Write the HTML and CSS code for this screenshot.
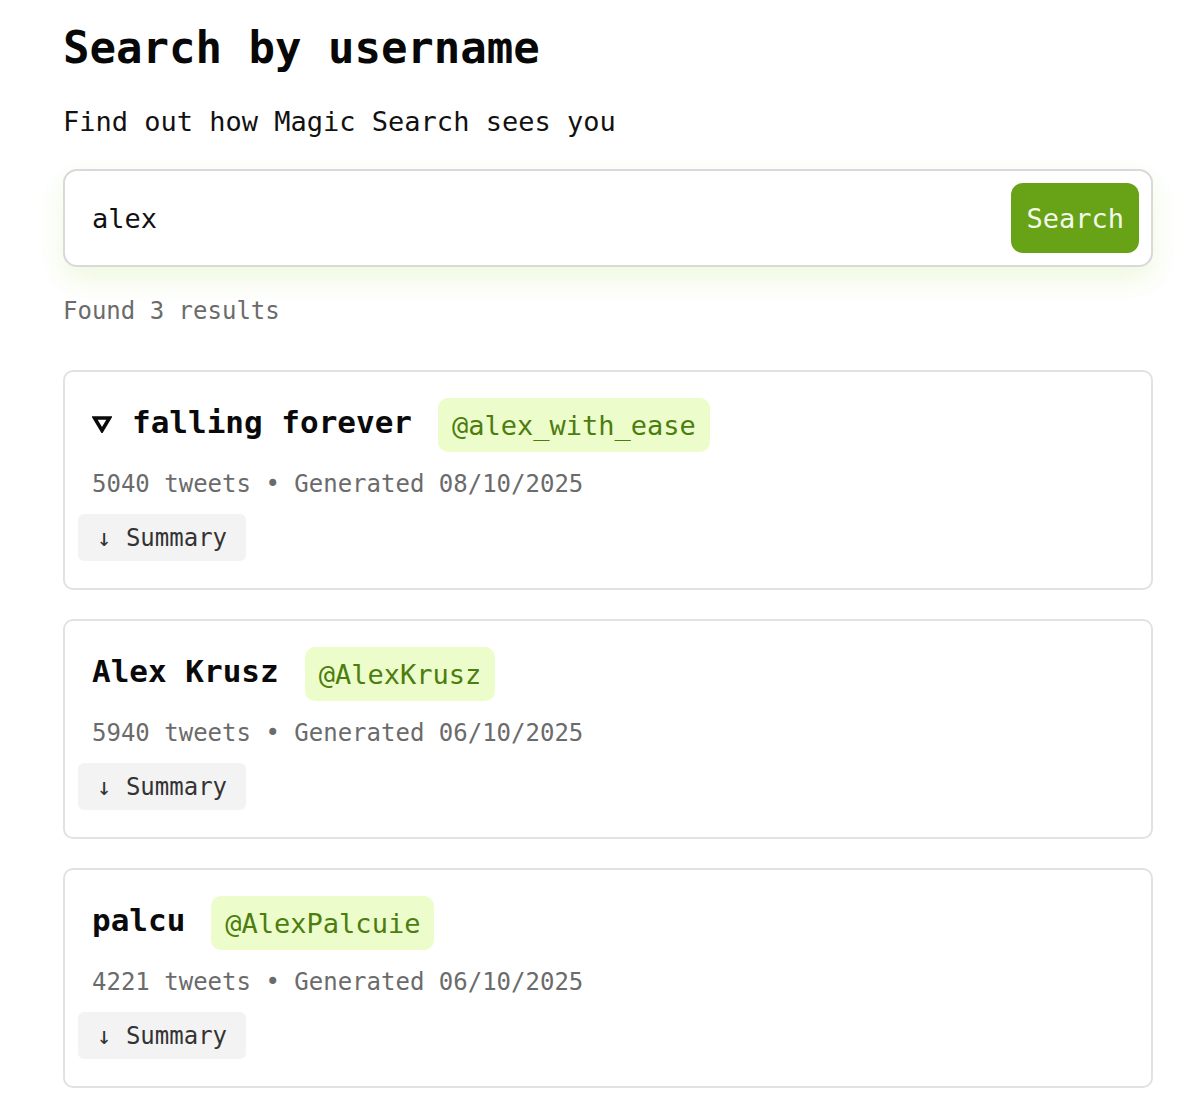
FILE: index.html
```html
<!DOCTYPE html>
<html lang="en">
<head>
<meta charset="utf-8">
<title>Search by username</title>
<link rel="stylesheet" href="styles.css">
</head>
<body>
<main class="page">
  <h1 class="title">Search by username</h1>
  <p class="subtitle">Find out how Magic Search sees you</p>
  <form class="search-box">
    <input class="search-input" type="text" value="alex">
    <button class="search-btn" type="button">Search</button>
  </form>
  <p class="found">Found 3 results</p>
  <section class="results">
    <article class="card">
      <div class="card-head">
        <h2 class="name"><svg class="tri" width="20" height="18" viewBox="0 0 20 18" aria-hidden="true"><path d="M2.5 3 H17.5 L10 15.5 Z" fill="none" stroke="#0a0a0a" stroke-width="3.6" stroke-linejoin="miter"/></svg>falling forever</h2>
        <span class="handle">@alex_with_ease</span>
      </div>
      <p class="meta">5040 tweets • Generated 08/10/2025</p>
      <button class="summary" type="button">↓ Summary</button>
    </article>
    <article class="card">
      <div class="card-head">
        <h2 class="name">Alex Krusz</h2>
        <span class="handle">@AlexKrusz</span>
      </div>
      <p class="meta">5940 tweets • Generated 06/10/2025</p>
      <button class="summary" type="button">↓ Summary</button>
    </article>
    <article class="card">
      <div class="card-head">
        <h2 class="name">palcu</h2>
        <span class="handle">@AlexPalcuie</span>
      </div>
      <p class="meta">4221 tweets • Generated 06/10/2025</p>
      <button class="summary" type="button">↓ Summary</button>
    </article>
  </section>
</main>
</body>
</html>
```
FILE: styles.css
```css
* { box-sizing: border-box; }
html, body { margin: 0; padding: 0; background: #ffffff; }
body {
  font-family: "DejaVu Sans Mono", "Liberation Mono", monospace;
  color: #0a0a0a;
}
.page {
  padding: 22px 47px 0 63px;
}
.title {
  margin: 0;
  font-size: 44px;
  line-height: 52px;
  font-weight: 700;
  color: #080808;
}
.subtitle {
  margin: 30px 0 0;
  font-size: 27px;
  line-height: 36px;
  color: #111;
}
.search-box {
  margin: 29px 0 0;
  display: flex;
  align-items: center;
  border: 2px solid #d9d9d9;
  border-radius: 14px;
  padding: 12px 12px 12px 27px;
  background: #fff;
  box-shadow: 0 12px 28px rgba(132, 204, 22, 0.14);
}
.search-input {
  flex: 1;
  border: none;
  outline: none;
  background: transparent;
  font-family: inherit;
  font-size: 27px;
  color: #111;
  padding: 0;
}
.search-btn {
  height: 70px;
  padding: 0 15px;
  border: none;
  border-radius: 12px;
  background: #68a216;
  color: #f3f9ea;
  font-family: inherit;
  font-size: 27px;
}
.found {
  margin: 28px 0 0;
  font-size: 24px;
  line-height: 32px;
  color: #6b6b6b;
}
.results {
  margin-top: 43px;
  display: flex;
  flex-direction: column;
  gap: 29px;
}
.card {
  border: 2px solid #e2e2e2;
  border-radius: 10px;
  padding: 26px 26px 27px 27px;
}
.card-head {
  display: flex;
  align-items: center;
  gap: 26px;
  height: 54px;
}
.name {
  display: flex;
  align-items: center;
  margin: 0 0 6px;
  font-size: 31px;
  line-height: 40px;
  font-weight: 700;
  color: #0a0a0a;
}
.tri {
  margin: 4px 20px 0 0;
  flex: none;
}
.handle {
  display: inline-flex;
  align-items: center;
  height: 54px;
  padding: 0 14px;
  border-radius: 10px;
  background: #ecfccb;
  color: #4d7c0f;
  font-size: 27px;
}
.meta {
  margin: 16px 0 0;
  font-size: 24px;
  line-height: 32px;
  color: #6b6b6b;
}
.summary {
  margin: 14px 0 0 -14px;
  height: 47px;
  padding: 0 19px;
  border: none;
  border-radius: 6px;
  background: #f3f3f3;
  color: #333;
  font-family: inherit;
  font-size: 24px;
}
```
